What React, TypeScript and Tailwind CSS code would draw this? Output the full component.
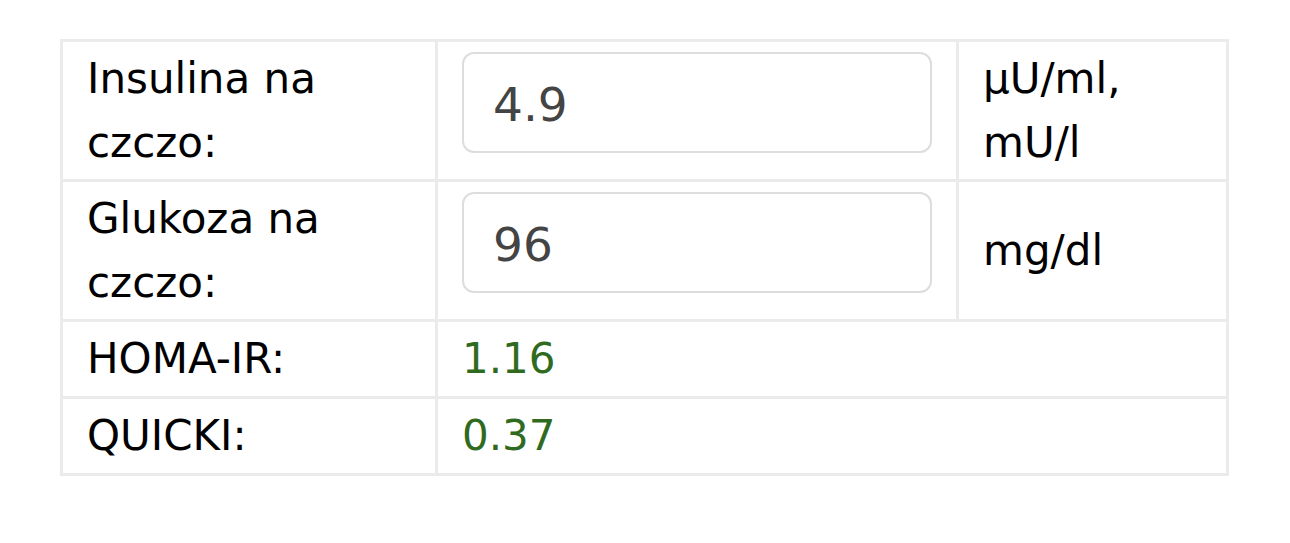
import React from 'react';

const cell = 'border-r-[3px] border-b-[3px] border-[#ebebeb] pl-6 pr-4 pt-[5px] pb-[4px] flex items-center';
const inputCls =
  'w-full h-[101px] border-2 border-[#dddddd] rounded-[12px] pl-[29px] pt-[4px] text-[47px] text-[#444444] outline-none';

const App = () => {
  return (
    <div
      className="w-[1290px] h-[543px] bg-white pt-[39px] pl-[60px] text-[42px] leading-[64px] text-black"
      style={{ fontFamily: '"DejaVu Sans", Verdana, sans-serif' }}
    >
      <div className="grid grid-cols-[375px_521px_270px] w-[1169px] border-l-[3px] border-t-[3px] border-[#ebebeb]">
        {/* insulina */}
        <div className={cell}>Insulina na czczo:</div>
        <div className="border-r-[3px] border-b-[3px] border-[#ebebeb] px-6 pt-[10px]">
          <input defaultValue="4.9" className={inputCls} style={{ fontFamily: '"DejaVu Sans", Verdana, sans-serif' }} />
        </div>
        <div className={cell}>μU/ml, mU/l</div>

        {/* glukoza */}
        <div className={cell}>Glukoza na czczo:</div>
        <div className="border-r-[3px] border-b-[3px] border-[#ebebeb] px-6 pt-[10px]">
          <input defaultValue="96" className={inputCls} style={{ fontFamily: '"DejaVu Sans", Verdana, sans-serif' }} />
        </div>
        <div className={cell}>mg/dl</div>

        {/* results */}
        <div className={`${cell} pb-[5px]`}>HOMA-IR:</div>
        <div className={`${cell} pb-[5px] col-span-2 text-[#2f6a1f]`}>1.16</div>
        <div className={`${cell} pb-[5px]`}>QUICKI:</div>
        <div className={`${cell} pb-[5px] col-span-2 text-[#2f6a1f]`}>0.37</div>
      </div>
    </div>
  );
};

export default App;
